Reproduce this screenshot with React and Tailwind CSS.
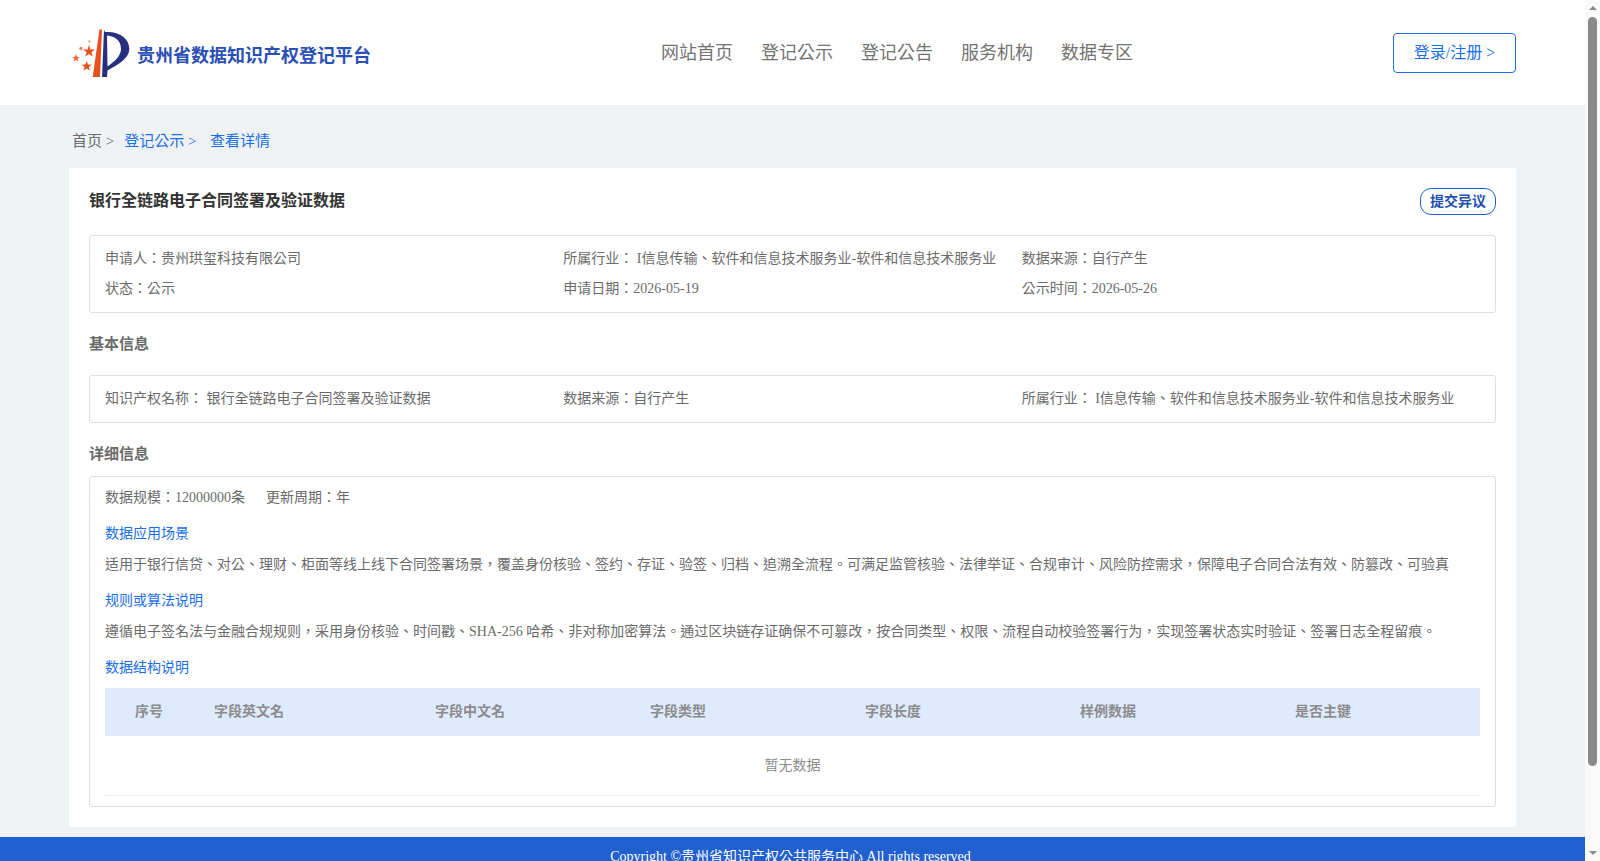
const navItems = ["网站首页", "登记公示", "登记公告", "服务机构", "数据专区"];
const tableHeads = ["字段英文名", "字段中文名", "字段类型", "字段长度", "样例数据", "是否主键"];
const industry = "I信息传输、软件和信息技术服务业-软件和信息技术服务业";

function Logo() {
  return (
    <svg width="60" height="54" viewBox="0 0 60 54" className="shrink-0">
      <path d="M27.5 3.5 L30 3.5 L28 51 L20.7 51 Z" fill="#e8501c" />
      <path
        fillRule="evenodd"
        d="M32 4 L33 6 C47 5 57.3 12 57.3 23 C57.3 32 47 38 35.5 44.5 L35 51 L30 51 Z M35 9.5 C43.5 10 49 15 49 23 C49 30 42 36 35.5 40.5 Z"
        fill="#27307f"
      />
      <polygon points="17,19 18.5,23.4 23,23.4 19.4,26.2 20.8,30.6 17,28 13.2,30.6 14.6,26.2 11,23.4 15.5,23.4" fill="#e8501c" />
      <polygon points="14.7,35 16,38.6 19.8,38.7 16.8,41 17.9,44.6 14.7,42.5 11.5,44.6 12.6,41 9.6,38.7 13.4,38.6" fill="#e8501c" />
      <polygon points="4,28 5,30.8 7.8,31 5.6,32.7 6.4,35.5 4,33.9 1.6,35.5 2.4,32.7 0.2,31 3,30.8" fill="#ec6a3a" />
      <circle cx="9" cy="22.5" r="1.7" fill="#f0875f" />
      <circle cx="17.5" cy="15.5" r="1.2" fill="#f3a585" />
    </svg>
  );
}

function Box({ className, children }) {
  return <div className={`rounded-[3px] border border-[#dcdfe3] ${className}`}>{children}</div>;
}

function Scrollbar() {
  return (
    <div className="fixed right-0 top-0 flex h-full w-[15px] flex-col items-center bg-[#fafafa]">
      <div className="mt-[6px] h-0 w-0 border-x-[4px] border-b-[4px] border-x-transparent border-b-[#8a8a8a]" />
      <div className="mt-[7px] h-[749px] w-[9px] rounded-[5px] bg-[#8a8a8a]" />
      <div className="mb-[6px] mt-auto h-0 w-0 border-x-[4px] border-t-[4px] border-x-transparent border-t-[#8a8a8a]" />
    </div>
  );
}

export default function App() {
  return (
    <div className="h-[861px] overflow-hidden">
      <div className="w-[1585px] bg-[#eef2f5] font-['Liberation_Serif','Noto_Sans_CJK_TC',serif] text-sm text-[#6b6b6b]">
        <header className="flex h-[105px] items-center bg-white pl-[72px] pr-[69px]">
          <div className="flex w-[589px] items-center">
            <Logo />
            <span className="ml-[5px] pt-[7px] text-lg font-bold text-[#2a4fb5]">贵州省数据知识产权登记平台</span>
          </div>
          <nav className="flex gap-[28px] text-lg text-[#737373]">
            {navItems.map((item) => (
              <a key={item}>{item}</a>
            ))}
          </nav>
          <button className="ml-auto h-10 w-[123px] rounded-[4px] border border-[#1a6ee8] pt-px text-base text-[#1a6ee8]">登录/注册 &gt;</button>
        </header>

        <main className="mx-[69px]">
          <div className="flex h-[63px] items-center pl-[3px] pt-[10px] text-[15px]">
            <span>首页 &gt;</span>
            <span className="ml-[10px] text-[#1a6ee8]">登记公示 &gt;</span>
            <span className="ml-[13.5px] text-[#1a6ee8]">查看详情</span>
          </div>

          <div className="bg-white p-5">
            <div className="mb-5 flex h-[27px] items-center justify-between">
              <h1 className="pb-[2px] text-base font-bold text-[#333]">银行全链路电子合同签署及验证数据</h1>
              <button className="h-[27px] w-[76px] rounded-[11px] border border-[#1f60d0] font-bold text-[#1f4fb0]">提交异议</button>
            </div>

            <Box className="px-[15px] py-[8px]">
              <div className="grid grid-cols-3 leading-[30px]">
                <div>申请人：贵州珙玺科技有限公司</div>
                <div>所属行业： {industry}</div>
                <div>数据来源：自行产生</div>
                <div>状态：公示</div>
                <div>申请日期：2026-05-19</div>
                <div>公示时间：2026-05-26</div>
              </div>
            </Box>

            <h2 className="my-[21px] text-[15px] font-bold leading-5">基本信息</h2>

            <Box className="px-[15px] py-[8px]">
              <div className="grid grid-cols-3 leading-[30px]">
                <div>知识产权名称： 银行全链路电子合同签署及验证数据</div>
                <div>数据来源：自行产生</div>
                <div>所属行业： {industry}</div>
              </div>
            </Box>

            <h2 className="mb-3 mt-[21px] text-[15px] font-bold leading-5">详细信息</h2>

            <Box className="px-[15px] pb-[10px] pt-[6px] leading-[30px]">
              <div className="flex gap-[21px]">
                <span>数据规模：12000000条</span>
                <span>更新周期：年</span>
              </div>
              <div className="mt-[6px] text-[#1a6ee8]">数据应用场景</div>
              <div className="pt-px">适用于银行信贷、对公、理财、柜面等线上线下合同签署场景，覆盖身份核验、签约、存证、验签、归档、追溯全流程。可满足监管核验、法律举证、合规审计、风险防控需求，保障电子合同合法有效、防篡改、可验真</div>
              <div className="mt-[6px] text-[#1a6ee8]">规则或算法说明</div>
              <div className="mt-px">遵循电子签名法与金融合规规则，采用身份核验、时间戳、SHA-256 哈希、非对称加密算法。通过区块链存证确保不可篡改，按合同类型、权限、流程自动校验签署行为，实现签署状态实时验证、签署日志全程留痕。</div>
              <div className="mt-[6px] text-[#1a6ee8]">数据结构说明</div>
              <div className="mt-[5px] grid h-12 grid-cols-[88px_221px_215px_215px_215px_215px_1fr] items-center bg-[#deeafd] font-bold text-[#8c8c8c]">
                <div className="text-center">序号</div>
                {tableHeads.map((head) => (
                  <div key={head} className="pl-[21px]">{head}</div>
                ))}
              </div>
              <div className="flex h-[60px] items-center justify-center border-b border-[#ebeef2] text-[#8c8c8c]">暂无数据</div>
            </Box>
          </div>
        </main>

        <footer className="mt-[10px] h-[112px] bg-[#2060d0] pr-[4px] pt-[10px] text-center leading-5 text-white">
          Copyright ©贵州省知识产权公共服务中心 All rights reserved
        </footer>
      </div>
      <Scrollbar />
    </div>
  );
}
